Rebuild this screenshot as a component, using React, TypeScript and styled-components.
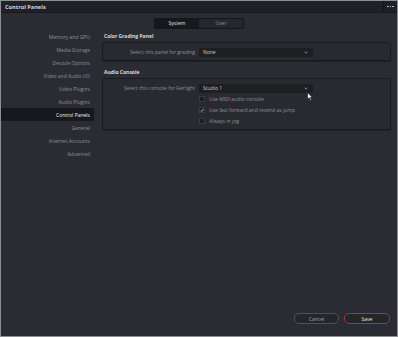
import React from 'react';
import styled, { createGlobalStyle } from 'styled-components';

const SIDEBAR_ITEMS = [
  'Memory and GPU',
  'Media Storage',
  'Decode Options',
  'Video and Audio I/O',
  'Video Plugins',
  'Audio Plugins',
  'Control Panels',
  'General',
  'Internet Accounts',
  'Advanced',
] as const;

const CHECKS = [
  { label: 'Use MIDI audio console', checked: false },
  { label: 'Use fast forward and rewind as jump', checked: true },
  { label: 'Always in jog', checked: false },
] as const;

const GlobalStyle = createGlobalStyle`
  html, body {
    margin: 0;
    padding: 0;
    background: #2b2c33;
  }
  * {
    box-sizing: border-box;
  }
`;

const Window = styled.div`
  position: relative;
  width: 398px;
  height: 337px;
  display: flex;
  flex-direction: column;
  background: #2b2c33;
  border: 1px solid #8e8f93;
  font-family: 'Open Sans', 'Noto Sans', sans-serif;
  color: #9a9ba1;
  overflow: hidden;
`;

const TitleBar = styled.div`
  height: 12px;
  display: flex;
  align-items: center;
  background: #202126;
  border-bottom: 1px solid #18191c;
`;

const Title = styled.div`
  flex: 1;
  padding-left: 4px;
  font-size: 5.6px;
  font-weight: 700;
  color: #d4d5d8;
`;

const More = styled.div`
  width: 14px;
  height: 100%;
  display: flex;
  align-items: center;
  justify-content: center;
  gap: 1px;
  border-left: 1px solid #141518;
`;

const Dot = styled.span`
  width: 1.6px;
  height: 1.6px;
  background: #b8b9bd;
`;

const TabsRow = styled.div`
  height: 17px;
  display: flex;
  align-items: center;
  justify-content: center;
  padding-top: 3px;
`;

const Tabs = styled.div`
  display: flex;
  border: 1px solid #151619;
  border-radius: 1px;
  overflow: hidden;
`;

const Tab = styled.div<{ $active?: boolean }>`
  width: 44px;
  height: 9px;
  display: flex;
  align-items: center;
  justify-content: center;
  font-size: 5px;
  background: ${(p) => (p.$active ? '#17181b' : '#26272d')};
  color: ${(p) => (p.$active ? '#e4e4e6' : '#8f9096')};
`;

const Body = styled.div`
  flex: 1;
  display: flex;
  min-height: 0;
`;

const Sidebar = styled.div`
  width: 93px;
  display: flex;
  flex-direction: column;
`;

const NavItem = styled.div<{ $active?: boolean }>`
  height: 13px;
  display: flex;
  align-items: center;
  justify-content: flex-end;
  padding-right: 4px;
  font-size: 5px;
  white-space: nowrap;
  background: ${(p) => (p.$active ? '#17181b' : 'transparent')};
  color: ${(p) => (p.$active ? '#f0f0f2' : '#8e8f95')};
`;

const Main = styled.div`
  flex: 1;
  display: flex;
  flex-direction: column;
  padding: 0 6px 0 8px;
`;

const SectionTitle = styled.div`
  height: 12px;
  display: flex;
  align-items: center;
  padding-left: 2px;
  font-size: 5px;
  font-weight: 700;
  color: #d8d9dc;
`;

const Box = styled.div`
  display: flex;
  flex-direction: column;
  gap: 1px;
  padding: 4px 0 3px;
  background: #292a30;
  border: 1px solid #1a1b1f;
  border-radius: 2px;
  box-shadow: 0 1px 0 #202126;
  margin-bottom: 5px;
`;

const Row = styled.div`
  display: grid;
  grid-template-columns: 92px 114px;
  column-gap: 4px;
  align-items: center;
  min-height: 10px;
`;

const Label = styled.div`
  text-align: right;
  font-size: 5px;
  white-space: nowrap;
  color: #8e8f95;
`;

const Select = styled.div`
  height: 9px;
  display: flex;
  align-items: center;
  justify-content: space-between;
  padding: 0 5px 0 4px;
  background: #1e1f23;
  border-radius: 1px;
  font-size: 5px;
  color: #c9cace;
`;

const Chevron = styled.svg`
  width: 4px;
  height: 3px;
`;

const CheckRow = styled.div`
  display: flex;
  align-items: center;
  gap: 4px;
  height: 10px;
  padding-left: 96px;
  font-size: 5px;
  color: #8e8f95;
`;

const CheckBox = styled.div`
  width: 6px;
  height: 6px;
  display: flex;
  align-items: center;
  justify-content: center;
  background: #1c1d21;
  border: 1px solid #3a3b41;
`;

const Footer = styled.div`
  height: 27px;
  display: flex;
  justify-content: flex-end;
  align-items: flex-start;
  gap: 5px;
  padding: 4px 7px 0 0;
`;

const Button = styled.div<{ $primary?: boolean }>`
  width: ${(p) => (p.$primary ? 46 : 45)}px;
  height: 11px;
  display: flex;
  align-items: center;
  justify-content: center;
  border-radius: 5px;
  font-size: 5px;
  background: #25262b;
  border: 1px solid ${(p) => (p.$primary ? '#a8333c' : '#505157')};
  color: ${(p) => (p.$primary ? '#e0e0e2' : '#a2a3a8')};
`;

const Cursor = styled.svg`
  position: absolute;
  left: 306px;
  top: 91px;
  width: 6px;
  height: 9px;
`;

const DropChevron: React.FC = () => (
  <Chevron viewBox="0 0 4 3">
    <path d="M0.5 0.8 L2 2.2 L3.5 0.8" stroke="#a0a1a6" strokeWidth="0.8" fill="none" />
  </Chevron>
);

const App: React.FC = () => (
  <>
    <GlobalStyle />
    <Window>
      <TitleBar>
        <Title>Control Panels</Title>
        <More>
          <Dot />
          <Dot />
          <Dot />
        </More>
      </TitleBar>
      <TabsRow>
        <Tabs>
          <Tab $active>System</Tab>
          <Tab>User</Tab>
        </Tabs>
      </TabsRow>
      <Body>
        <Sidebar>
          {SIDEBAR_ITEMS.map((name) => (
            <NavItem key={name} $active={name === 'Control Panels'}>
              {name}
            </NavItem>
          ))}
        </Sidebar>
        <Main>
          <SectionTitle>Color Grading Panel</SectionTitle>
          <Box>
            <Row>
              <Label>Select this panel for grading</Label>
              <Select>
                None
                <DropChevron />
              </Select>
            </Row>
          </Box>
          <SectionTitle>Audio Console</SectionTitle>
          <Box>
            <Row>
              <Label>Select this console for Fairlight</Label>
              <Select>
                Studio 1
                <DropChevron />
              </Select>
            </Row>
            {CHECKS.map(({ label, checked }) => (
              <CheckRow key={label}>
                <CheckBox>
                  {checked && (
                    <svg width="5" height="5" viewBox="0 0 5 5">
                      <path d="M0.8 2.6 L2 3.8 L4.3 0.6" stroke="#e8e8ea" strokeWidth="0.9" fill="none" />
                    </svg>
                  )}
                </CheckBox>
                {label}
              </CheckRow>
            ))}
          </Box>
        </Main>
      </Body>
      <Footer>
        <Button>Cancel</Button>
        <Button $primary>Save</Button>
      </Footer>
      <Cursor viewBox="0 0 6 9">
        <path d="M0.5 0.5 L0.5 7.5 L2.2 5.8 L3.4 8.4 L4.4 7.9 L3.3 5.4 L5.5 5.4 Z" fill="#f2f2f2" stroke="#111" strokeWidth="0.6" />
      </Cursor>
    </Window>
  </>
);

export default App;
